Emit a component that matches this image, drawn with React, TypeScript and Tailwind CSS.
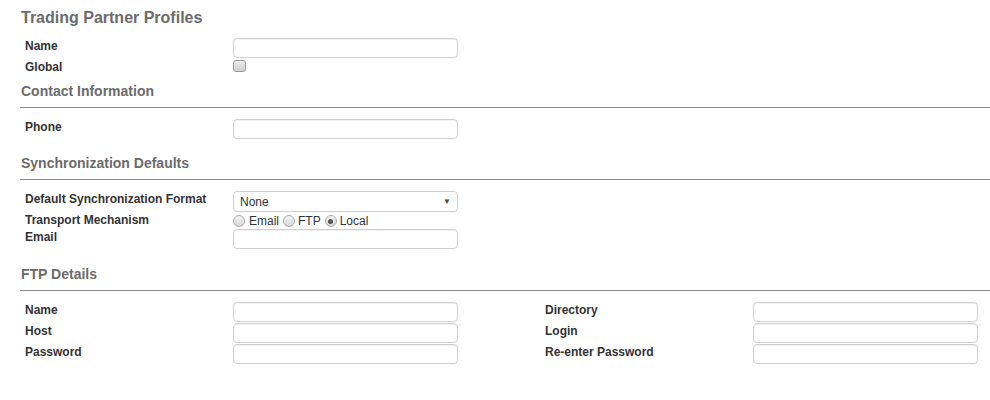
import React from "react";

const font = { fontFamily: '"Liberation Sans", Arial, sans-serif' };

function TextBox() {
  return (
    <div className="w-[225px] h-[20px] rounded-[4px] border border-[#cfcfcf] bg-white shadow-[inset_0_1px_1px_rgba(0,0,0,0.06)]" />
  );
}

function Row({ label, children }: { label: string; children: React.ReactNode }) {
  return (
    <div className="flex items-start h-[21px]">
      <div className="w-[208px] pt-[1px] text-[12px] leading-[14px] font-bold text-[#333]">{label}</div>
      {children}
    </div>
  );
}

function Radio({ checked }: { checked?: boolean }) {
  return (
    <span className="inline-flex items-center justify-center w-[12px] h-[12px] rounded-full border border-[#a9a9a9] bg-gradient-to-b from-[#f4f4f4] to-[#d6d6d6]">
      {checked && <span className="w-[5px] h-[5px] rounded-full bg-[#555]" />}
    </span>
  );
}

function Section({ title, top }: { title: string; top: string }) {
  return (
    <div className={top}>
      <div className="pl-[21px] text-[14px] leading-[18px] font-bold text-[#6b6b6b]">{title}</div>
      <div className="ml-[20px] mt-[7px] h-px bg-[#888]" />
    </div>
  );
}

export default function App() {
  return (
    <div className="w-[990px] h-[400px] bg-white overflow-hidden" style={font}>
      <div className="pt-[8px] pl-[21px] text-[16px] leading-[20px] font-bold text-[#6b6b6b]">
        Trading Partner Profiles
      </div>

      <div className="pl-[25px] mt-[10px]">
        <Row label="Name">
          <TextBox />
        </Row>
        <div className="flex items-start h-[17px]">
          <div className="w-[208px] pt-[1px] text-[12px] leading-[14px] font-bold text-[#333]">Global</div>
          <span className="mt-[1px] w-[13px] h-[12px] rounded-[3px] border border-[#9a9a9a] bg-gradient-to-b from-[#eee] to-[#cfcfcf]" />
        </div>
      </div>

      <Section title="Contact Information" top="mt-[6px]" />
      <div className="pl-[25px] mt-[11px]">
        <Row label="Phone">
          <TextBox />
        </Row>
      </div>

      <Section title="Synchronization Defaults" top="mt-[14px]" />
      <div className="pl-[25px] mt-[11px]">
        <Row label="Default Synchronization Format">
          <div className="w-[225px] h-[21px] rounded-[4px] border border-[#cfcfcf] bg-white flex items-center justify-between pl-[6px] pr-[6px] text-[12px] text-[#333]">
            <span>None</span>
            <span className="text-[8px] text-[#444]">▼</span>
          </div>
        </Row>
        <div className="flex items-start h-[17px]">
          <div className="w-[208px] pt-[1px] text-[12px] leading-[14px] font-bold text-[#333]">Transport Mechanism</div>
          <div className="flex items-center text-[12px] leading-[14px] text-[#333] pt-[2px]">
            <Radio />
            <span className="ml-[4px] mr-[4px]">Email</span>
            <Radio />
            <span className="ml-[3px] mr-[4px]">FTP</span>
            <Radio checked />
            <span className="ml-[3px]">Local</span>
          </div>
        </div>
        <Row label="Email">
          <TextBox />
        </Row>
      </div>

      <Section title="FTP Details" top="mt-[15px]" />
      <div className="pl-[25px] mt-[11px] grid grid-cols-[433px_433px] gap-x-[87px]">
        <div>
          <Row label="Name"><TextBox /></Row>
          <Row label="Host"><TextBox /></Row>
          <Row label="Password"><TextBox /></Row>
        </div>
        <div>
          <Row label="Directory"><TextBox /></Row>
          <Row label="Login"><TextBox /></Row>
          <Row label="Re-enter Password"><TextBox /></Row>
        </div>
      </div>
    </div>
  );
}
